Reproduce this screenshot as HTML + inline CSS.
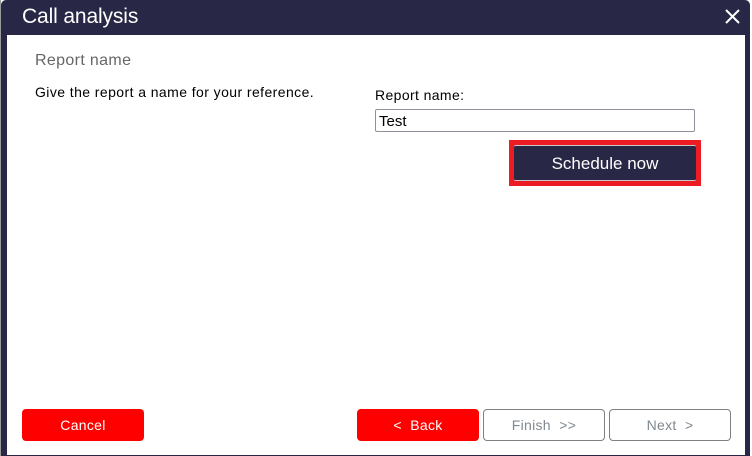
<!DOCTYPE html>
<html>
<head>
<meta charset="utf-8">
<style>
html,body{margin:0;padding:0;background:#fff}
body{width:752px;height:456px;overflow:hidden;position:relative;font-family:"Liberation Sans",sans-serif}
div{position:absolute;box-sizing:border-box;white-space:nowrap}
.dlg{left:1px;top:0;width:749px;height:456px;background:#282846;border-radius:5px 5px 0 0}
.strip{left:0;top:0;width:1px;height:456px;background:#9a9a9a}
.body{left:7px;top:35px;width:738px;height:420px;background:#fff}
.t{line-height:20px}
.btn{top:409px;width:122px;height:32px;border-radius:4px;text-align:center;font-size:14px;line-height:32px;letter-spacing:.3px}
.red{background:#f00;color:#fff}
.off{background:#fff;border:1px solid #808080;color:#808890;line-height:30px}
</style>
</head>
<body>
<div class="strip"></div>
<div class="dlg"></div>
<div class="body"></div>
<div class="t" style="left:22px;top:7px;color:#fff;font-size:21px;letter-spacing:-.13px">Call analysis</div>
<svg style="position:absolute;left:725px;top:9px" width="15" height="15" viewBox="0 0 15 15"><path d="M1 1L14 14M14 1L1 14" stroke="#fff" stroke-width="2" fill="none"/></svg>
<div class="t" style="left:35px;top:51px;color:#666;font-size:16px;letter-spacing:.35px">Report name</div>
<div class="t" style="left:35px;top:82px;color:#000;font-size:14px;letter-spacing:.42px">Give the report a name for your reference.</div>
<div class="t" style="left:375px;top:85px;color:#000;font-size:14px;letter-spacing:.38px">Report name:</div>
<div style="left:375px;top:109px;width:320px;height:23px;border:1px solid #8f8f9d;border-radius:2px;background:#fff;padding-left:3px;font-size:15px;line-height:23px;color:#000">Test</div>
<div style="left:509px;top:140px;width:192px;height:46px;background:#ed1c24"></div>
<div style="left:514px;top:145px;width:182px;height:36px;background:#282846;border-top:1px solid #c8c8c8;border-bottom:1px solid #c8c8c8;border-radius:2px;color:#fff;text-align:center;font-size:17px;line-height:36px">Schedule now</div>
<div class="btn red" style="left:22px">Cancel</div>
<div class="btn red" style="left:357px">&lt;&nbsp; Back</div>
<div class="btn off" style="left:483px">Finish&nbsp; &gt;&gt;</div>
<div class="btn off" style="left:609px">Next&nbsp; &gt;</div>
</body>
</html>
